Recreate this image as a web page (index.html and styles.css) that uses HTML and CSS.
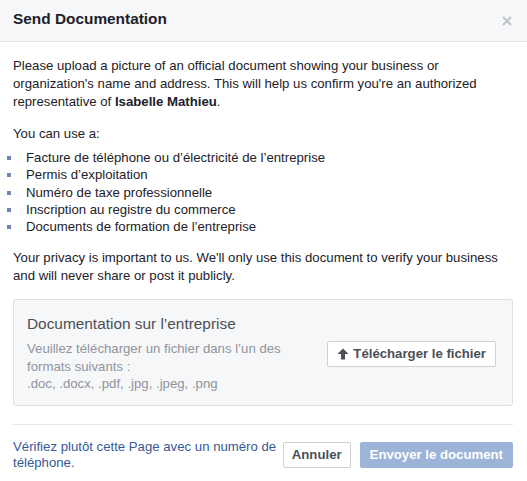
FILE: index.html
```html
<!DOCTYPE html>
<html>
<head>
<meta charset="utf-8">
<link rel="stylesheet" href="styles.css">
</head>
<body>
<div class="dialog">
  <div class="header">
    <div class="title">Send Documentation</div>
    <svg class="close" width="10" height="10" viewBox="0 0 10 10"><path d="M1 1L9 9M9 1L1 9" stroke="#bec2c9" stroke-width="2"/></svg>
  </div>
  <div class="content">
    <p class="para">Please upload a picture of an official document showing your business or organization's name and address. This will help us confirm you're an authorized representative of <b>Isabelle Mathieu</b>.</p>
    <p class="para lead">You can use a:</p>
    <ul class="list">
      <li>Facture de téléphone ou d’électricité de l’entreprise</li>
      <li>Permis d’exploitation</li>
      <li>Numéro de taxe professionnelle</li>
      <li>Inscription au registre du commerce</li>
      <li>Documents de formation de l’entreprise</li>
    </ul>
    <p class="para">Your privacy is important to us. We'll only use this document to verify your business and will never share or post it publicly.</p>
    <div class="upload">
      <div class="upload-text">
        <div class="upload-title">Documentation sur l’entreprise</div>
        <div class="upload-desc">Veuillez télécharger un fichier dans l’un des formats suivants :<br>.doc, .docx, .pdf, .jpg, .jpeg, .png</div>
      </div>
      <div class="btn upload-btn"><svg class="arrow" width="12" height="12" viewBox="0 0 12 12"><path d="M6 0.5L11.5 6H8V11.5H4V6H0.5Z" fill="#4b4f56"/></svg>Télécharger le fichier</div>
    </div>
  </div>
  <div class="footer">
    <a class="link">Vérifiez plutôt cette Page avec un numéro de téléphone.</a>
    <div class="actions">
      <div class="btn cancel">Annuler</div>
      <div class="btn primary">Envoyer le document</div>
    </div>
  </div>
</div>
</body>
</html>
```
FILE: styles.css
```css
html, body {
  margin: 0;
  padding: 0;
  background: #ffffff;
}
body {
  font-family: "Liberation Sans", Arial, sans-serif;
  font-size: 13.2px;
  color: #1d2129;
}
.dialog {
  width: 527px;
}
.header {
  height: 41px;
  background: #f6f7f9;
  border-bottom: 1px solid #e5e5e5;
  padding: 0 13px;
  display: flex;
  align-items: center;
  justify-content: space-between;
}
.title {
  font-size: 15.4px;
  font-weight: bold;
  color: #1d2129;
  margin-top: -3px;
}
.close {
  margin-right: 2px;
}
.content {
  padding: 15px 14px 0 13px;
}
.para {
  margin: 0;
  line-height: 18px;
}
.para.lead {
  margin-top: 14px;
}
.list {
  list-style: none;
  margin: 6px 0 14px 0;
  padding: 0;
}
.list li {
  line-height: 17.25px;
  padding-left: 13px;
  position: relative;
}
.list li::before {
  content: "";
  position: absolute;
  left: -6px;
  top: 7px;
  width: 4px;
  height: 4px;
  background: #6d84b4;
}
.upload {
  margin-top: 14px;
  background: #f6f7f9;
  border: 1px solid #dddfe2;
  border-radius: 3px;
  padding: 14px 16px 12px 13px;
  display: flex;
  align-items: center;
  justify-content: space-between;
}
.upload-title {
  font-size: 15.4px;
  line-height: 20px;
  color: #4b4f56;
  margin-bottom: 6px;
}
.upload-desc {
  width: 285px;
  color: #90949c;
  line-height: 17.5px;
}
.btn {
  display: flex;
  align-items: center;
  box-sizing: border-box;
  height: 26px;
  padding: 0 9px;
  border: 1px solid #ced0d4;
  border-radius: 2px;
  background: #f6f7f9;
  color: #4b4f56;
  font-weight: bold;
  font-size: 13.2px;
  white-space: nowrap;
}
.cancel {
  padding: 0 8px;
  background: #ffffff;
}
.upload-btn {
  padding: 0 9px 0 9px;
  background: #ffffff;
}
.arrow {
  margin-right: 4px;
}
.footer {
  margin: 18px 14px 0 13px;
  border-top: 1px solid #e5e5e5;
  padding-top: 14px;
  display: flex;
  align-items: center;
  justify-content: space-between;
}
.link {
  width: 272px;
  color: #365899;
  line-height: 16px;
}
.actions {
  display: flex;
  gap: 9px;
}
.primary {
  background: #9cb4d8;
  border-color: #9cb4d8;
  color: #ffffff;
}
```
